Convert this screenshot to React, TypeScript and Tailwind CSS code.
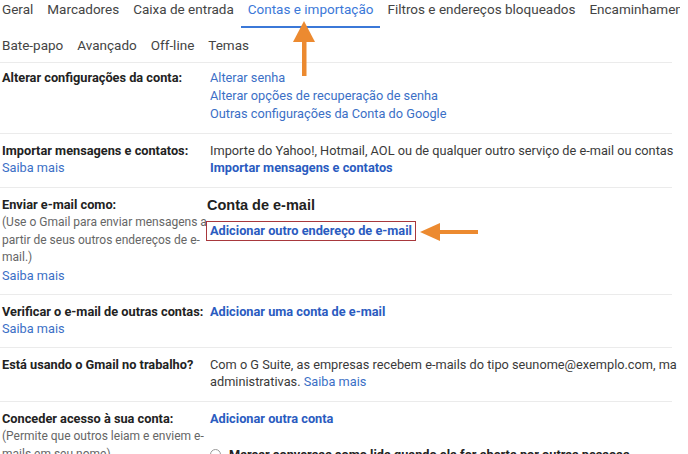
import type { ReactNode } from 'react'

const TABS_ROW1 = ['Geral', 'Marcadores', 'Caixa de entrada', 'Contas e importação', 'Filtros e endereços bloqueados', 'Encaminhamento']
const TABS_ROW2 = ['Bate-papo', 'Avançado', 'Off-line', 'Temas']
const ACTIVE_TAB = 'Contas e importação'

function Section({ label, sub, children, className = '' }: { label: ReactNode; sub?: ReactNode; children: ReactNode; className?: string }) {
  return (
    <div className={`grid grid-cols-[210px_1fr] border-b border-[#ebebeb] w-[672px] ${className}`}>
      <div className="pl-[2px]">
        <div className="font-bold text-[#222] whitespace-nowrap">{label}</div>
        {sub}
      </div>
      <div className="min-w-0">{children}</div>
    </div>
  )
}

const Link = ({ children, bold = false }: { children: ReactNode; bold?: boolean }) => (
  <a className={`cursor-pointer whitespace-nowrap ${bold ? 'font-bold text-[#2a5bc0]' : 'text-[#3b6fc6]'}`}>{children}</a>
)

export default function App() {
  return (
    <div className="relative h-[454px] w-[688px] overflow-hidden bg-white font-['Roboto',sans-serif] text-[12.75px] leading-[17px] text-[#3a3a3a]">
      {/* tabs */}
      <div className="w-[672px] border-b border-[#ebebeb]">
        <div className="-ml-[5px] flex h-[28px] w-[685px] overflow-hidden whitespace-nowrap text-[13.5px] leading-[18px]">
          {TABS_ROW1.map(t => (
            <div
              key={t}
              className={`px-[7px] border-b-2 ${t === ACTIVE_TAB ? 'border-[#3b78d8] text-[#3b78d8]' : 'border-transparent text-[#444]'}`}
            >
              {t}
            </div>
          ))}
        </div>
        <div className="-ml-[5px] flex h-[34px] pt-[8px] whitespace-nowrap text-[13.5px] leading-[18px] text-[#444]">
          {TABS_ROW2.map(t => (
            <div key={t} className="px-[7px]">{t}</div>
          ))}
        </div>
      </div>

      <Section label="Alterar configurações da conta:" className="pt-[6px] pb-[10px] leading-[18px]">
        <div className="flex flex-col items-start">
          <Link>Alterar senha</Link>
          <Link>Alterar opções de recuperação de senha</Link>
          <Link>Outras configurações da Conta do Google</Link>
        </div>
      </Section>

      <Section
        label="Importar mensagens e contatos:"
        sub={<Link>Saiba mais</Link>}
        className="pt-[8px] pb-[11px]"
      >
        <div className="whitespace-nowrap">Importe do Yahoo!, Hotmail, AOL ou de qualquer outro serviço de e-mail ou contas</div>
        <Link bold>Importar mensagens e contatos</Link>
      </Section>

      <Section
        label="Enviar e-mail como:"
        sub={
          <div className="leading-[17.5px]">
            <div className="pt-[1px] text-[12px] text-[#666]">
              (Use o Gmail para enviar mensagens a<br />
              partir de seus outros endereços de e-<br />
              mail.)
            </div>
            <Link>Saiba mais</Link>
          </div>
        }
        className="pt-[8px] pb-[10px]"
      >
        <div className="-ml-[3px] font-['Liberation_Sans',Arial,sans-serif] text-[14.5px] font-bold leading-[18px] text-[#222]">Conta de e-mail</div>
        <div className="mt-[7px] -ml-[4px] inline-block border border-[#a8383c] px-[3px] leading-[18px]">
          <Link bold>Adicionar outro endereço de e-mail</Link>
        </div>
      </Section>

      <Section label="Verificar o e-mail de outras contas:" sub={<Link>Saiba mais</Link>} className="pt-[8px] pb-[10px]">
        <Link bold>Adicionar uma conta de e-mail</Link>
      </Section>

      <Section label="Está usando o Gmail no trabalho?" className="pt-[8px] pb-[11px]">
        <div className="whitespace-nowrap">Com o G Suite, as empresas recebem e-mails do tipo seunome@exemplo.com, ma</div>
        <div>
          administrativas. <Link>Saiba mais</Link>
        </div>
      </Section>

      <Section
        label="Conceder acesso à sua conta:"
        sub={
          <div className="text-[12px] leading-[18px] text-[#666]">
            (Permite que outros leiam e enviem e-<br />
            mails em seu nome)
          </div>
        }
        className="pt-[8px] pb-[10px]"
      >
        <Link bold>Adicionar outra conta</Link>
        <div className="mt-[19px] flex items-center gap-[8px] whitespace-nowrap">
          <span className="h-[11px] w-[11px] rounded-full border border-[#999]" />
          <span className="font-bold text-[#222]">Marcar conversas como lida quando ela for aberta por outras pessoas</span>
        </div>
      </Section>

      {/* annotation arrows */}
      <svg className="absolute left-[291px] top-[20px]" width="26" height="58" viewBox="0 0 26 58">
        <polygon points="13,1 2,22 24,22" fill="#ec8a30" />
        <rect x="11" y="21" width="4.5" height="35" fill="#ec8a30" />
      </svg>
      <svg className="absolute left-[419px] top-[221px]" width="62" height="22" viewBox="0 0 62 22">
        <polygon points="1,11 21,2 21,20" fill="#ec8a30" />
        <rect x="20" y="9" width="39" height="4" fill="#ec8a30" />
      </svg>
    </div>
  )
}
